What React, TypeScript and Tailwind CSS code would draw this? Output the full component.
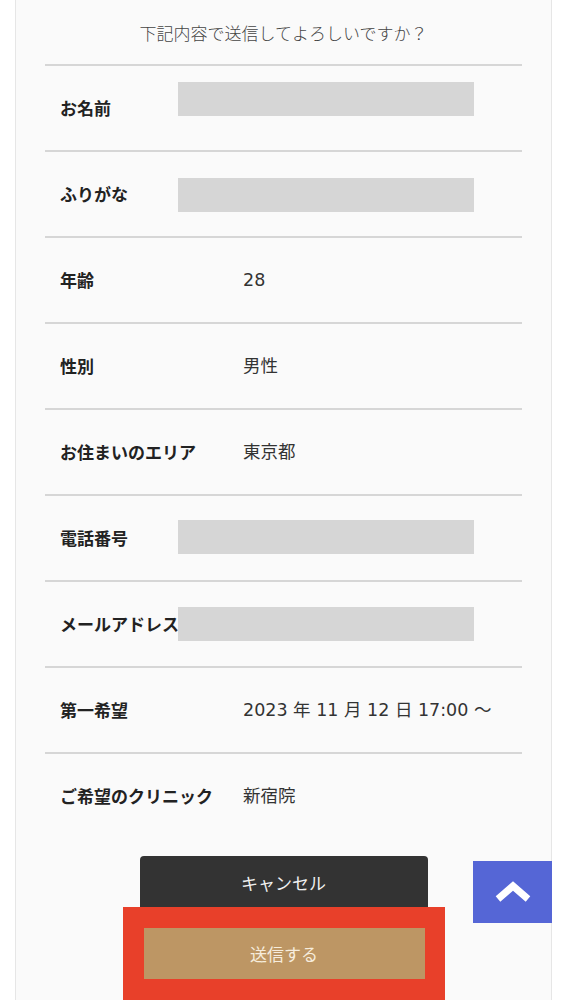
type Row = { label: string; value?: string; redact?: number }

const rows: Row[] = [
  { label: "お名前", redact: 16 },
  { label: "ふりがな", redact: 26 },
  { label: "年齢", value: "28" },
  { label: "性別", value: "男性" },
  { label: "お住まいのエリア", value: "東京都" },
  { label: "電話番号", redact: 24 },
  { label: "メールアドレス", redact: 25 },
  { label: "第一希望", value: "2023 年 11 月 12 日 17:00 〜" },
  { label: "ご希望のクリニック", value: "新宿院" },
]

export default function App() {
  return (
    <div
      className="h-[1000px] overflow-hidden bg-white text-[#333]"
      style={{ fontFamily: '"Noto Sans CJK JP", "Liberation Sans", sans-serif' }}
    >
      <div className="mx-[15px] h-full border-x border-[#e6e6e6] bg-[#fafafa] px-[29px]">
        <p className="flex h-[64px] items-center justify-center pt-[1px] text-[17px] font-light text-[#444]">
          下記内容で送信してよろしいですか？
        </p>

        {rows.map((r) => (
          <div
            key={r.label}
            className="flex h-[86px] items-center border-t-2 border-[#d6d6d6] pl-[15px]"
          >
            <span className="w-[183px] shrink-0 text-[17px] font-bold text-[#222]">{r.label}</span>
            {r.value && (
              <span
                className="text-[17.5px] text-[#333]"
                style={{ fontFamily: '"DejaVu Sans", "Noto Sans CJK JP", sans-serif' }}
              >
                {r.value}
              </span>
            )}
            {r.redact !== undefined && (
              // redaction block laid over the value
              <div
                className="relative -ml-[65px] h-[34px] w-[296px] self-start bg-[#d6d6d6]"
                style={{ marginTop: r.redact }}
              />
            )}
          </div>
        ))}

        <div className="flex flex-col items-center pt-[18px]">
          <button className="h-[56px] w-[288px] rounded-t-[4px] bg-[#333333] pb-[2px] text-[17px] text-[#f0f0f0]">
            キャンセル
          </button>
          {/* red highlight frame around the submit button */}
          <div className="relative -mt-[5px] w-[322px] border-[20px] border-[#e8402a] bg-[#e8402a] pl-[1px] pt-[1px] pb-[30px]">
            <button className="block h-[51px] w-[281px] bg-[#bd9664] text-[17px] text-[#f6ecdc]">
              送信する
            </button>
          </div>
        </div>
      </div>

      {/* scroll to top */}
      <div className="fixed right-[15px] bottom-[77px] flex h-[62px] w-[79px] items-center justify-center bg-[#5566d6]">
        <svg width="38" height="24" viewBox="0 0 38 24" fill="none">
          <path d="M4 19 L19 6 L34 19" stroke="white" strokeWidth="7" strokeLinecap="butt" strokeLinejoin="miter" />
        </svg>
      </div>
    </div>
  )
}
